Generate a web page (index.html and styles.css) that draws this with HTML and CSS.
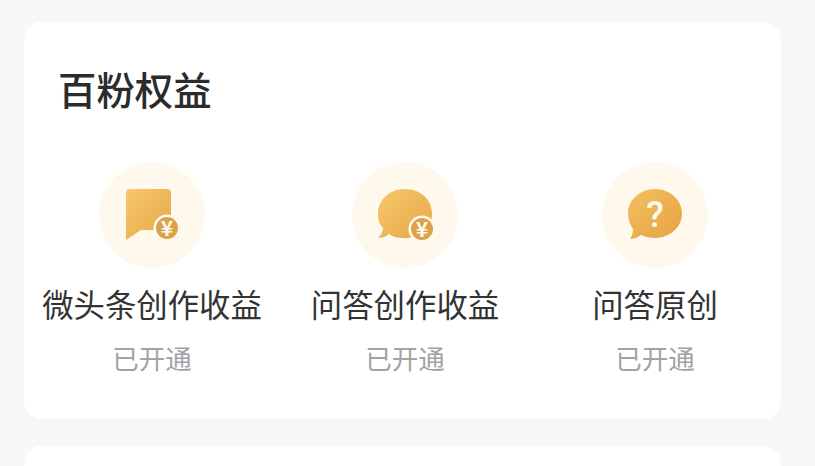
FILE: index.html
```html
<!DOCTYPE html>
<html>

<head>
    <meta charset="UTF-8">
    <title>百粉权益</title>
    <link rel="stylesheet" href="styles.css">
</head>

<body>
    <svg class="defs" width="0" height="0">
        <defs>
            <linearGradient id="gold" x1="0" y1="0" x2="1" y2="1">
                <stop offset="0" stop-color="#f7c86c" />
                <stop offset="1" stop-color="#e7a747" />
            </linearGradient>
            <linearGradient id="gold-deep" x1="0" y1="0" x2="1" y2="1">
                <stop offset="0" stop-color="#f4bf5f" />
                <stop offset="1" stop-color="#e5a344" />
            </linearGradient>
        </defs>
    </svg>
    <div class="page">
        <section class="card">
            <h1 class="card-title">百粉权益</h1>
            <div class="perks">
                <div class="perk">
                    <svg class="perk-icon" width="106" height="106" viewBox="0 0 106 106">
                        <circle cx="53" cy="53" r="53" fill="#fff9ed" />
                        <path d="M31 27H68a4 4 0 0 1 4 4V68H42L27 78V31a4 4 0 0 1 4-4Z" fill="url(#gold)" />
                        <circle cx="68" cy="66" r="13.500" fill="#fff9ed" />
                        <circle cx="68" cy="66" r="11" fill="#dba24a" />
                        <text class="yen" x="68" y="73.500" text-anchor="middle">¥</text>
                    </svg>
                    <div class="perk-name">微头条创作收益</div>
                    <div class="perk-status">已开通</div>
                </div>
                <div class="perk">
                    <svg class="perk-icon" width="106" height="106" viewBox="0 0 106 106">
                        <circle cx="53" cy="53" r="53" fill="#fff9ed" />
                        <path d="M53 27C69 27 80 38 80 52S69 76 53 76C46 76 41 75 37 72C33 75 30 76 26 76C29 73 31 70 31 66C27 62 26 57 26 52C26 38 37 27 53 27Z" fill="url(#gold)" />
                        <circle cx="70" cy="67" r="13.500" fill="#fff9ed" />
                        <circle cx="70" cy="67" r="11" fill="#dba24a" />
                        <text class="yen" x="70" y="74.500" text-anchor="middle">¥</text>
                    </svg>
                    <div class="perk-name">问答创作收益</div>
                    <div class="perk-status">已开通</div>
                </div>
                <div class="perk">
                    <svg class="perk-icon" width="106" height="106" viewBox="0 0 106 106">
                        <circle cx="53" cy="53" r="53" fill="#fff9ed" />
                        <path d="M53 27C68 27 80 38 80 51.500S68 76 53 76C48 76 43 75 39 73C36 75 32 77 28 77C30 74 31 71 31 67C28 63 26 57 26 51.500C26 38 38 27 53 27Z" fill="url(#gold-deep)" />
                        <text class="ask" x="53" y="65" text-anchor="middle">?</text>
                    </svg>
                    <div class="perk-name">问答原创</div>
                    <div class="perk-status">已开通</div>
                </div>
            </div>
        </section>
        <section class="card card-next"></section>
    </div>
</body>

</html>
```

FILE: styles.css
```css
html,
body {
    margin: 0;
    padding: 0;
}

body {
    background-color: #f7f7f7;
    font-family: "Noto Sans CJK SC", "Noto Sans", sans-serif;
}

.defs {
    display: block;
    height: 0;
}

.page {
    box-sizing: border-box;
    height: 466px;
    overflow: hidden;
    padding: 22px 34px 0 24px;
}

.card {
    background-color: #ffffff;
    border-radius: 18px;
    height: 397px;
    box-sizing: border-box;
    padding-top: 44px;
}

.card-next {
    margin-top: 27px;
}

.card-title {
    color: #2b2b2b;
    font-size: 38.400px;
    font-weight: 500;
    line-height: 44px;
    margin: 0 0 52px 34px;
}

.perks {
    display: grid;
    grid-template-columns: 252px 254px 246px;
    padding-left: 2px;
}

.perk {
    align-items: center;
    display: flex;
    flex-direction: column;
}

.perk-icon {
    display: block;
}

.perk-name {
    color: #333333;
    font-size: 31.400px;
    line-height: 40px;
    margin-top: 16px;
}

.perk-status {
    color: #a3a3a3;
    font-size: 26.500px;
    line-height: 36px;
    margin-top: 16px;
}

.yen {
    fill: #fff9ed;
    font-family: "Noto Sans CJK SC", sans-serif;
    font-size: 21px;
    font-weight: 700;
}

.ask {
    fill: #fff9ed;
    font-family: Roboto, sans-serif;
    font-size: 36px;
    font-weight: 500;
}
```
